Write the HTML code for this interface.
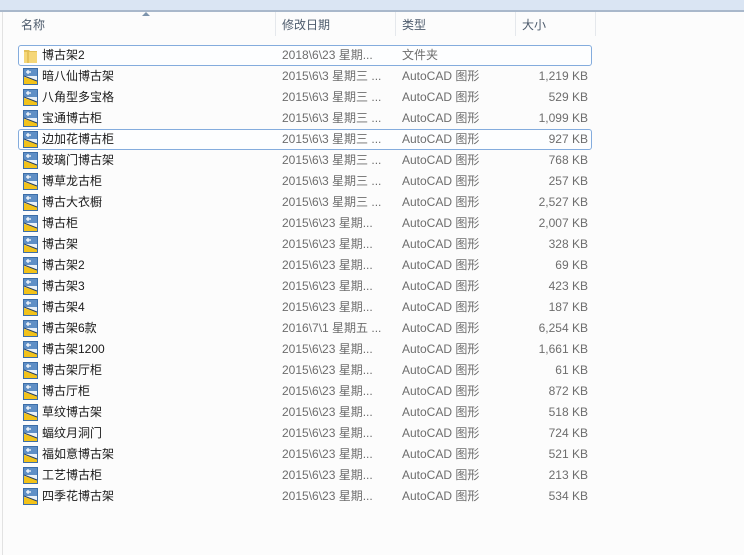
<!DOCTYPE html>
<html><head><meta charset="utf-8"><style>
body{margin:0;width:744px;height:555px;background:#fcfcfc;position:relative;overflow:hidden;font-family:"Liberation Sans","Noto Sans CJK SC",sans-serif;font-size:12px}
.top{position:absolute;left:0;top:0;width:744px;height:10px;background:#dae5f3}
.top2{position:absolute;left:0;top:10px;width:744px;height:2px;background:#a9b8cb}
.lb{position:absolute;left:2px;top:12px;width:1px;height:543px;background:#e2e2e2}
.h{position:absolute;top:16px;color:#4d5b6c;font-size:12px}
.sep{position:absolute;top:12px;width:1px;height:24px;background:#e5e8ec}
.list{position:absolute;left:18px;top:45px;width:574px}
.r{position:relative;width:574px;height:21px;line-height:21px;box-sizing:border-box}
.n{position:absolute;left:24px;color:#1a1a1a}
.d{position:absolute;left:264px;color:#6d6d6d}
.t{position:absolute;left:384px;color:#6d6d6d}
.s{position:absolute;right:4px;color:#6d6d6d}
.ic{position:absolute;left:5px;top:2px;width:15px;height:17px}
.sel{border:1px solid #84acdd;border-radius:3px;background:#fdfeff}
.sel .n,.sel .d,.sel .t,.sel .s{margin-top:-1px}
.sel .n{left:23px}.sel .d{left:263px}.sel .t{left:383px}.sel .s{right:3px}
.sel .ic{top:1px;left:4px}
.arrow{position:absolute;left:142px;top:12px;width:0;height:0;border-left:4px solid transparent;border-right:4px solid transparent;border-bottom:4px solid #7d94ac}
</style></head><body>
<svg width="0" height="0" style="position:absolute"><defs>
<symbol id="cad" viewBox="0 0 15 17"><rect x="0.5" y="0.5" width="14" height="16" fill="#eaf1f9" stroke="#3d6ea8"/><rect x="1" y="1" width="13" height="7" fill="#5f8fc6"/><path d="M1 9 L14 13 L14 16 L1 16Z" fill="#f2c21a"/><path d="M1 8 L14 13" stroke="#28405e" stroke-width="1"/><path d="M3 4h5M5 2v4" stroke="#fff" stroke-width="1.2"/></symbol>
</defs></svg>
<div class="top"></div><div class="top2"></div><div class="lb"></div>
<div class="arrow"></div>
<div class="h" style="left:21px">名称</div>
<div class="h" style="left:282px">修改日期</div>
<div class="h" style="left:402px">类型</div>
<div class="h" style="left:522px">大小</div>
<div class="sep" style="left:275px"></div><div class="sep" style="left:395px"></div><div class="sep" style="left:515px"></div><div class="sep" style="left:595px"></div>
<div class="list">
<div class="r sel"><svg class="ic" viewBox="0 0 15 17"><path d="M1 3h5l1 1h7v12H1z" fill="#e2bf58"/><path d="M1 5h13v11H1z" fill="#f5d779"/><path d="M5 5v11" stroke="#d6ac3c"/></svg><span class="n">博古架2</span><span class="d">2018\6\23 星期...</span><span class="t">文件夹</span><span class="s"></span></div>
<div class="r"><svg class="ic"><use href="#cad"/></svg><span class="n">暗八仙博古架</span><span class="d">2015\6\3 星期三 ...</span><span class="t">AutoCAD 图形</span><span class="s">1,219 KB</span></div>
<div class="r"><svg class="ic"><use href="#cad"/></svg><span class="n">八角型多宝格</span><span class="d">2015\6\3 星期三 ...</span><span class="t">AutoCAD 图形</span><span class="s">529 KB</span></div>
<div class="r"><svg class="ic"><use href="#cad"/></svg><span class="n">宝通博古柜</span><span class="d">2015\6\3 星期三 ...</span><span class="t">AutoCAD 图形</span><span class="s">1,099 KB</span></div>
<div class="r sel"><svg class="ic"><use href="#cad"/></svg><span class="n">边加花博古柜</span><span class="d">2015\6\3 星期三 ...</span><span class="t">AutoCAD 图形</span><span class="s">927 KB</span></div>
<div class="r"><svg class="ic"><use href="#cad"/></svg><span class="n">玻璃门博古架</span><span class="d">2015\6\3 星期三 ...</span><span class="t">AutoCAD 图形</span><span class="s">768 KB</span></div>
<div class="r"><svg class="ic"><use href="#cad"/></svg><span class="n">博草龙古柜</span><span class="d">2015\6\3 星期三 ...</span><span class="t">AutoCAD 图形</span><span class="s">257 KB</span></div>
<div class="r"><svg class="ic"><use href="#cad"/></svg><span class="n">博古大衣橱</span><span class="d">2015\6\3 星期三 ...</span><span class="t">AutoCAD 图形</span><span class="s">2,527 KB</span></div>
<div class="r"><svg class="ic"><use href="#cad"/></svg><span class="n">博古柜</span><span class="d">2015\6\23 星期...</span><span class="t">AutoCAD 图形</span><span class="s">2,007 KB</span></div>
<div class="r"><svg class="ic"><use href="#cad"/></svg><span class="n">博古架</span><span class="d">2015\6\23 星期...</span><span class="t">AutoCAD 图形</span><span class="s">328 KB</span></div>
<div class="r"><svg class="ic"><use href="#cad"/></svg><span class="n">博古架2</span><span class="d">2015\6\23 星期...</span><span class="t">AutoCAD 图形</span><span class="s">69 KB</span></div>
<div class="r"><svg class="ic"><use href="#cad"/></svg><span class="n">博古架3</span><span class="d">2015\6\23 星期...</span><span class="t">AutoCAD 图形</span><span class="s">423 KB</span></div>
<div class="r"><svg class="ic"><use href="#cad"/></svg><span class="n">博古架4</span><span class="d">2015\6\23 星期...</span><span class="t">AutoCAD 图形</span><span class="s">187 KB</span></div>
<div class="r"><svg class="ic"><use href="#cad"/></svg><span class="n">博古架6款</span><span class="d">2016\7\1 星期五 ...</span><span class="t">AutoCAD 图形</span><span class="s">6,254 KB</span></div>
<div class="r"><svg class="ic"><use href="#cad"/></svg><span class="n">博古架1200</span><span class="d">2015\6\23 星期...</span><span class="t">AutoCAD 图形</span><span class="s">1,661 KB</span></div>
<div class="r"><svg class="ic"><use href="#cad"/></svg><span class="n">博古架厅柜</span><span class="d">2015\6\23 星期...</span><span class="t">AutoCAD 图形</span><span class="s">61 KB</span></div>
<div class="r"><svg class="ic"><use href="#cad"/></svg><span class="n">博古厅柜</span><span class="d">2015\6\23 星期...</span><span class="t">AutoCAD 图形</span><span class="s">872 KB</span></div>
<div class="r"><svg class="ic"><use href="#cad"/></svg><span class="n">草纹博古架</span><span class="d">2015\6\23 星期...</span><span class="t">AutoCAD 图形</span><span class="s">518 KB</span></div>
<div class="r"><svg class="ic"><use href="#cad"/></svg><span class="n">蝠纹月洞门</span><span class="d">2015\6\23 星期...</span><span class="t">AutoCAD 图形</span><span class="s">724 KB</span></div>
<div class="r"><svg class="ic"><use href="#cad"/></svg><span class="n">福如意博古架</span><span class="d">2015\6\23 星期...</span><span class="t">AutoCAD 图形</span><span class="s">521 KB</span></div>
<div class="r"><svg class="ic"><use href="#cad"/></svg><span class="n">工艺博古柜</span><span class="d">2015\6\23 星期...</span><span class="t">AutoCAD 图形</span><span class="s">213 KB</span></div>
<div class="r"><svg class="ic"><use href="#cad"/></svg><span class="n">四季花博古架</span><span class="d">2015\6\23 星期...</span><span class="t">AutoCAD 图形</span><span class="s">534 KB</span></div>
</div>
</body></html>
